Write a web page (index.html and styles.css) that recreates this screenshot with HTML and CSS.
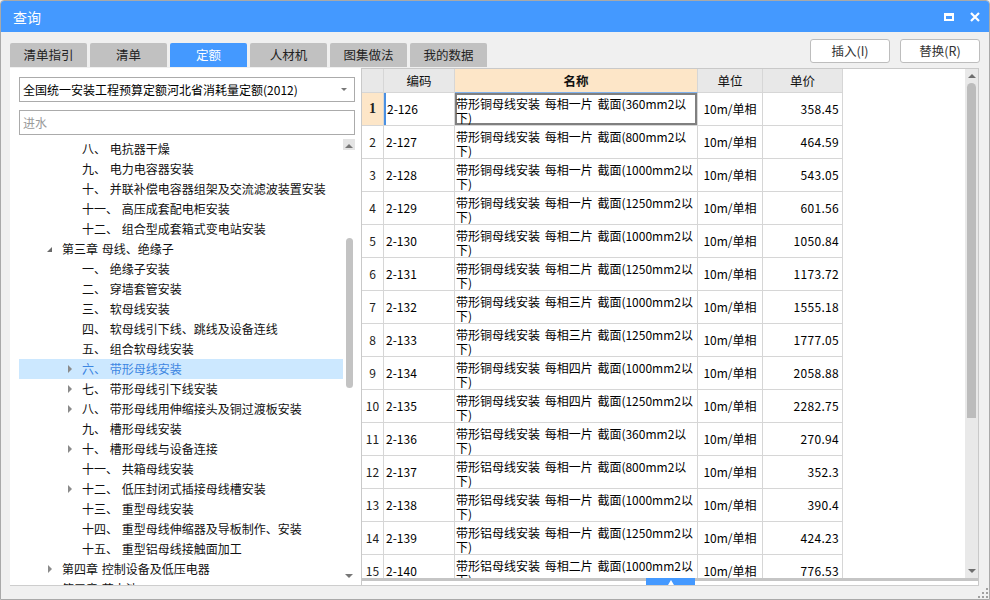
FILE: index.html
```html
<!DOCTYPE html>
<html lang="zh-CN">
<head>
<meta charset="utf-8">
<title>查询</title>
<link rel="stylesheet" href="styles.css">
</head>
<body>
<div class="window">
  <div class="titlebar">
    <span class="title">查询</span>
    <div class="winbtns">
      <span class="maxbtn"></span>
      <svg class="closebtn" width="10" height="10" viewBox="0 0 10 10"><path d="M1 1 L9 9 M9 1 L1 9" stroke="#fff" stroke-width="2.2" fill="none"/></svg>
    </div>
  </div>

  <div class="toprow">
    <div class="tabs">
      <div class="tab">清单指引</div>
      <div class="tab">清单</div>
      <div class="tab active">定额</div>
      <div class="tab">人材机</div>
      <div class="tab">图集做法</div>
      <div class="tab">我的数据</div>
    </div>
    <div class="actions">
      <button class="btn">插入(I)</button>
      <button class="btn">替换(R)</button>
    </div>
  </div>

  <div class="main">
    <div class="leftpanel">
      <div class="select">
        <span class="select-text">全国统一安装工程预算定额河北省消耗量定额(2012)</span>
        <span class="select-arrow"></span>
      </div>
      <div class="search">进水</div>
      <div class="treebox">
        <div class="tree">
          <div class="node l2"><span class="exp"></span><span class="txt">八、 电抗器干燥</span></div>
          <div class="node l2"><span class="exp"></span><span class="txt">九、 电力电容器安装</span></div>
          <div class="node l2"><span class="exp"></span><span class="txt">十、 并联补偿电容器组架及交流滤波装置安装</span></div>
          <div class="node l2"><span class="exp"></span><span class="txt">十一、 高压成套配电柜安装</span></div>
          <div class="node l2"><span class="exp"></span><span class="txt">十二、 组合型成套箱式变电站安装</span></div>
          <div class="node l1"><span class="exp open"></span><span class="txt">第三章 母线、绝缘子</span></div>
          <div class="node l2"><span class="exp"></span><span class="txt">一、 绝缘子安装</span></div>
          <div class="node l2"><span class="exp"></span><span class="txt">二、 穿墙套管安装</span></div>
          <div class="node l2"><span class="exp"></span><span class="txt">三、 软母线安装</span></div>
          <div class="node l2"><span class="exp"></span><span class="txt">四、 软母线引下线、跳线及设备连线</span></div>
          <div class="node l2"><span class="exp"></span><span class="txt">五、 组合软母线安装</span></div>
          <div class="node l2 selected"><span class="exp closed"></span><span class="txt">六、 带形母线安装</span></div>
          <div class="node l2"><span class="exp closed"></span><span class="txt">七、 带形母线引下线安装</span></div>
          <div class="node l2"><span class="exp closed"></span><span class="txt">八、 带形母线用伸缩接头及铜过渡板安装</span></div>
          <div class="node l2"><span class="exp"></span><span class="txt">九、 槽形母线安装</span></div>
          <div class="node l2"><span class="exp closed"></span><span class="txt">十、 槽形母线与设备连接</span></div>
          <div class="node l2"><span class="exp"></span><span class="txt">十一、 共箱母线安装</span></div>
          <div class="node l2"><span class="exp closed"></span><span class="txt">十二、 低压封闭式插接母线槽安装</span></div>
          <div class="node l2"><span class="exp"></span><span class="txt">十三、 重型母线安装</span></div>
          <div class="node l2"><span class="exp"></span><span class="txt">十四、 重型母线伸缩器及导板制作、安装</span></div>
          <div class="node l2"><span class="exp"></span><span class="txt">十五、 重型铝母线接触面加工</span></div>
          <div class="node l1"><span class="exp closed"></span><span class="txt">第四章 控制设备及低压电器</span></div>
          <div class="node l1"><span class="exp closed"></span><span class="txt">第五章 蓄电池</span></div>
        </div>
        <div class="tscroll">
          <div class="tarrow up hot"><span></span></div>
          <div class="tthumb"></div>
          <div class="tspacer"></div>
          <div class="tarrow down"><span></span></div>
        </div>
      </div>
    </div>

    <div class="tablearea">
      <div class="tview">
        <div class="grid">
          <div class="h c0"></div>
          <div class="h">编码</div>
          <div class="h hname">名称</div>
          <div class="h">单位</div>
          <div class="h">单价</div>

          <div class="c c0 cur">1</div><div class="c code curcode">2-126</div><div class="c name curname">带形铜母线安装 每相一片 截面(360mm2以<br>下)</div><div class="c unit">10m/单相</div><div class="c price">358.45</div>
          <div class="c c0">2</div><div class="c code">2-127</div><div class="c name">带形铜母线安装 每相一片 截面(800mm2以<br>下)</div><div class="c unit">10m/单相</div><div class="c price">464.59</div>
          <div class="c c0">3</div><div class="c code">2-128</div><div class="c name">带形铜母线安装 每相一片 截面(1000mm2以<br>下)</div><div class="c unit">10m/单相</div><div class="c price">543.05</div>
          <div class="c c0">4</div><div class="c code">2-129</div><div class="c name">带形铜母线安装 每相一片 截面(1250mm2以<br>下)</div><div class="c unit">10m/单相</div><div class="c price">601.56</div>
          <div class="c c0">5</div><div class="c code">2-130</div><div class="c name">带形铜母线安装 每相二片 截面(1000mm2以<br>下)</div><div class="c unit">10m/单相</div><div class="c price">1050.84</div>
          <div class="c c0">6</div><div class="c code">2-131</div><div class="c name">带形铜母线安装 每相二片 截面(1250mm2以<br>下)</div><div class="c unit">10m/单相</div><div class="c price">1173.72</div>
          <div class="c c0">7</div><div class="c code">2-132</div><div class="c name">带形铜母线安装 每相三片 截面(1000mm2以<br>下)</div><div class="c unit">10m/单相</div><div class="c price">1555.18</div>
          <div class="c c0">8</div><div class="c code">2-133</div><div class="c name">带形铜母线安装 每相三片 截面(1250mm2以<br>下)</div><div class="c unit">10m/单相</div><div class="c price">1777.05</div>
          <div class="c c0">9</div><div class="c code">2-134</div><div class="c name">带形铜母线安装 每相四片 截面(1000mm2以<br>下)</div><div class="c unit">10m/单相</div><div class="c price">2058.88</div>
          <div class="c c0">10</div><div class="c code">2-135</div><div class="c name">带形铜母线安装 每相四片 截面(1250mm2以<br>下)</div><div class="c unit">10m/单相</div><div class="c price">2282.75</div>
          <div class="c c0">11</div><div class="c code">2-136</div><div class="c name">带形铝母线安装 每相一片 截面(360mm2以<br>下)</div><div class="c unit">10m/单相</div><div class="c price">270.94</div>
          <div class="c c0">12</div><div class="c code">2-137</div><div class="c name">带形铝母线安装 每相一片 截面(800mm2以<br>下)</div><div class="c unit">10m/单相</div><div class="c price">352.3</div>
          <div class="c c0">13</div><div class="c code">2-138</div><div class="c name">带形铝母线安装 每相一片 截面(1000mm2以<br>下)</div><div class="c unit">10m/单相</div><div class="c price">390.4</div>
          <div class="c c0">14</div><div class="c code">2-139</div><div class="c name">带形铝母线安装 每相一片 截面(1250mm2以<br>下)</div><div class="c unit">10m/单相</div><div class="c price">424.23</div>
          <div class="c c0">15</div><div class="c code">2-140</div><div class="c name">带形铝母线安装 每相二片 截面(1000mm2以<br>下)</div><div class="c unit">10m/单相</div><div class="c price">776.53</div>
        </div>
      </div>
      <div class="vscroll">
        <div class="varrow up"><span></span></div>
        <div class="vthumb"></div>
        <div class="vspacer"></div>
        <div class="varrow down"><span></span></div>
      </div>
      <div class="hscroll">
        <div class="hthumb"><span></span></div>
      </div>
    </div>
  </div>

  <div class="footer">
    <svg class="grip" width="10" height="10" viewBox="0 0 10 10">
      <rect x="8" y="0" width="2" height="2" fill="#a0a0a0"/>
      <rect x="4" y="4" width="2" height="2" fill="#a0a0a0"/>
      <rect x="8" y="4" width="2" height="2" fill="#a0a0a0"/>
      <rect x="0" y="8" width="2" height="2" fill="#a0a0a0"/>
      <rect x="4" y="8" width="2" height="2" fill="#a0a0a0"/>
      <rect x="8" y="8" width="2" height="2" fill="#a0a0a0"/>
    </svg>
  </div>
</div>
</body>
</html>
```

FILE: styles.css
```css
* { box-sizing: border-box; }
html, body { margin: 0; padding: 0; }
body {
  width: 990px;
  height: 600px;
  overflow: hidden;
  background: #f0f0f0;
  font-family: "Noto Sans CJK SC", "Microsoft YaHei", sans-serif;
  font-size: 12px;
  color: #000;
}
.window {
  width: 990px;
  height: 600px;
  border: 1px solid #a9a9a9;
  border-radius: 4px 4px 0 0;
  background: #f0f0f0;
  display: flex;
  flex-direction: column;
  overflow: hidden;
}

/* title bar */
.titlebar {
  height: 31px;
  flex: none;
  background: #4499ff;
  color: #fff;
  display: flex;
  align-items: center;
  justify-content: space-between;
  padding: 0 9px 0 12px;
}
.title { font-size: 14px; line-height: 16px; margin-top: 1px; }
.winbtns { display: flex; align-items: center; gap: 16px; margin-top: 1px; }
.maxbtn {
  display: block;
  width: 10px;
  height: 8px;
  border: 2px solid #fff;
  border-top-width: 3px;
}
.closebtn { display: block; }

/* tabs row */
.toprow {
  height: 36px;
  flex: none;
  display: flex;
  justify-content: space-between;
  padding: 0 9px 0 9px;
}
.tabs {
  display: flex;
  gap: 3px;
  align-self: flex-end;
  margin-bottom: 1px;
}
.tab {
  width: 77px;
  height: 24px;
  background: #c1c1c1;
  border-radius: 2px 2px 0 0;
  color: #222;
  font-size: 12.5px;
  line-height: 24px;
  text-align: center;
}
.tab.active { background: #4499ff; color: #fff; }
.actions { display: flex; gap: 10px; padding-top: 7px; }
.btn {
  width: 80px;
  height: 24px;
  background: #fff;
  border: 1px solid #bdbdbd;
  border-radius: 3px;
  font-family: "Noto Sans CJK SC", sans-serif;
  font-size: 12.5px;
  line-height: 20px;
  color: #333;
  padding: 0;
}

/* main area */
.main {
  height: 518px;
  flex: none;
  margin: 0 10px 0 9px;
  display: flex;
  border-bottom: 1px solid #cdcdcd;
}
.leftpanel {
  width: 351px;
  flex: none;
  background: #fff;
  padding: 9px 6px 0 9px;
  display: flex;
  flex-direction: column;
}
.select, .search {
  height: 25px;
  border: 1px solid #ababab;
  background: #fff;
  display: flex;
  align-items: center;
  padding-left: 3px;
  flex: none;
}
.select { justify-content: space-between; padding-right: 7px; }
.select-text { font-size: 12px; line-height: 16px; white-space: nowrap; }
.select-arrow {
  width: 0; height: 0;
  border-left: 3px solid transparent;
  border-right: 3px solid transparent;
  border-top: 3px solid #777;
}
.search { margin-top: 8px; color: #9a9a9a; line-height: 16px; }

.treebox {
  margin-top: 4px;
  flex: 1;
  display: flex;
  overflow: hidden;
  min-height: 0;
}
.tree { flex: 1; overflow: hidden; }
.node {
  height: 20px;
  display: flex;
  align-items: center;
  white-space: nowrap;
  color: #111;
}
.node .txt { line-height: 16px; word-spacing: 1px; }
.node.l1 { padding-left: 28px; }
.node.l2 { padding-left: 48px; }
.node.selected { background: #cce8ff; margin-right: -2px; }
.node.selected .txt { color: #3d86e2; }
.exp {
  width: 15px;
  height: 20px;
  flex: none;
  position: relative;
}
.exp.closed::before {
  content: "";
  position: absolute;
  left: 1px;
  top: 6px;
  border-left: 4px solid #8a8a8a;
  border-top: 4px solid transparent;
  border-bottom: 4px solid transparent;
}
.exp.open::before {
  content: "";
  position: absolute;
  left: 0px;
  top: 8px;
  border-bottom: 5px solid #6a6a6a;
  border-left: 5px solid transparent;
}
.tscroll {
  width: 12px;
  flex: none;
  display: flex;
  flex-direction: column;
  background: #fff;
}
.tarrow {
  height: 11px;
  flex: none;
  display: flex;
  align-items: center;
  justify-content: center;
}
.tarrow.hot { background: #e4e4e4; }
.tarrow span { width: 0; height: 0; border-left: 4px solid transparent; border-right: 4px solid transparent; }
.tarrow.up span { border-bottom: 4px solid #777; margin-top: 3px; }
.tarrow.down span { border-top: 4px solid #777; }
.tarrow.down { height: 14px; margin-bottom: 2px; }
.tthumb {
  height: 150px;
  width: 7px;
  margin: 88px 0 0 3px;
  background: #c3c3c3;
  border-radius: 4px;
  flex: none;
}
.tspacer { flex: 1; }

/* table area */
.tablearea {
  flex: 1;
  border-left: 1px solid #c9c9c9;
  border-top: 1px solid #c9c9c9;
  border-right: 1px solid #c9c9c9;
  background: #fff;
  display: grid;
  grid-template-columns: 1fr 13px;
  grid-template-rows: 509px 7px;
  overflow: hidden;
}
.tview { overflow: hidden; background: #fff; }
.grid {
  display: grid;
  grid-template-columns: 22px 71px 243px 65px 80px;
  grid-template-rows: 24px;
  grid-auto-rows: 33px;
  width: 481px;
}
.h, .c {
  border-right: 1px solid #d6d6d6;
  border-bottom: 1px solid #d6d6d6;
  display: flex;
  align-items: center;
  white-space: nowrap;
  overflow: hidden;
}
.h {
  background: #e8e8e8;
  justify-content: center;
  font-size: 12.5px;
  line-height: 16px;
  color: #111;
}
.h.hname {
  background: #fde6c8;
  font-weight: bold;
  border-bottom: 1px solid #7fb2ee;
}
.c { font-size: 12px; line-height: 14px; }
.c0 { justify-content: center; color: #222; }
.c0.cur {
  background: #fde6c8;
  font-family: "Liberation Serif", serif;
  font-weight: bold;
  font-size: 14px;
}
.code { padding-left: 2px; }
.curcode { box-shadow: inset 2px 0 0 #4a90e2; padding-left: 3px; }
.name {
  padding: 4px 0 0 1px;
  align-items: flex-start;
  white-space: normal;
  word-spacing: 2px;
}
.curname { box-shadow: inset 0 0 0 2px #808080; }
.unit { justify-content: center; }
.price { justify-content: flex-end; padding-right: 3px; letter-spacing: 0.3px; }

.vscroll {
  background: #e9e9e9;
  display: flex;
  flex-direction: column;
  align-items: center;
}
.varrow {
  height: 14px;
  flex: none;
  display: flex;
  align-items: center;
  justify-content: center;
}
.varrow span { width: 0; height: 0; border-left: 4px solid transparent; border-right: 4px solid transparent; }
.varrow.up span { border-bottom: 4px solid #6e6e6e; }
.varrow.down span { border-top: 4px solid #6e6e6e; }
.vthumb {
  width: 9px;
  height: 335px;
  background: #bcbcbc;
  border-radius: 5px 5px 0 0;
  flex: none;
}
.vspacer { flex: 1; }

.hscroll {
  grid-column: 1 / span 2;
  border-top: 3px solid #c5c5c5;
  background: #fff;
}
.hthumb {
  margin-left: 284px;
  margin-top: -3px;
  width: 49px;
  height: 8px;
  background: #4499ff;
  display: flex;
  justify-content: center;
  align-items: center;
}
.hthumb span {
  width: 0; height: 0;
  border-left: 3px solid transparent;
  border-right: 3px solid transparent;
  border-bottom: 5px solid #fff;
}

.footer {
  height: 13px;
  flex: none;
  display: flex;
  justify-content: flex-end;
  align-items: flex-end;
  padding: 0 1px 1px 0;
}
.grip { display: block; }
```
